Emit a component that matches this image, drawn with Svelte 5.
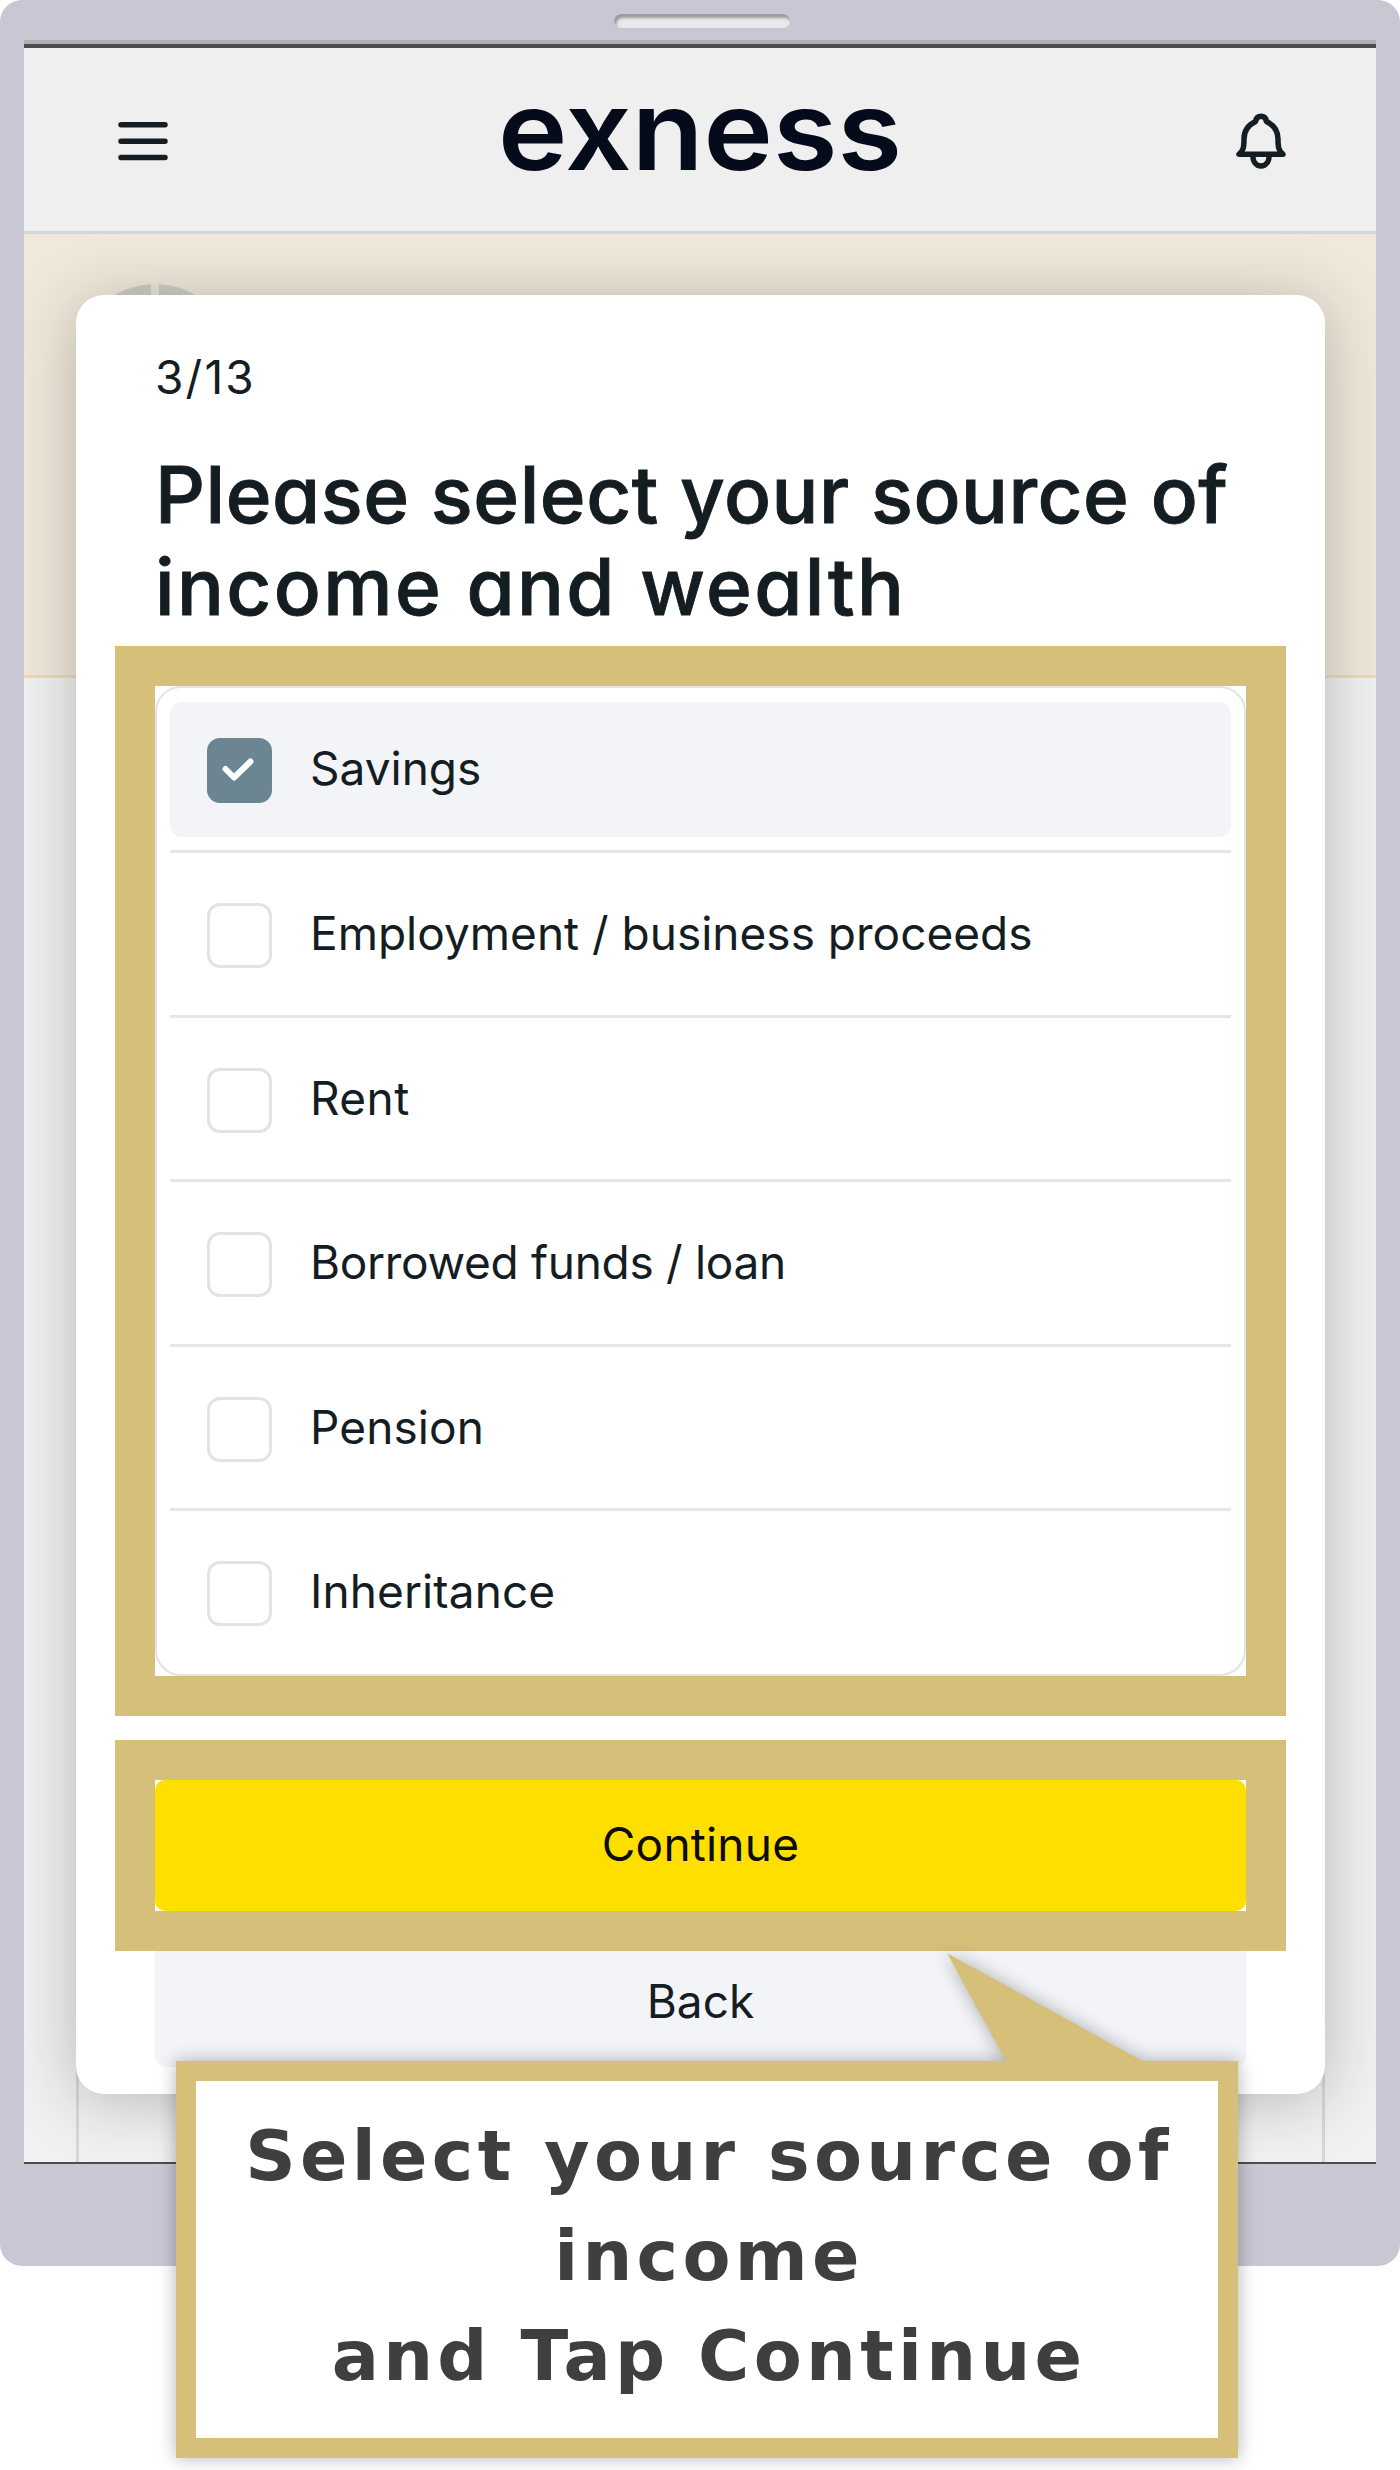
<script lang="ts">
	// Current step of the questionnaire
	let step: number = 3;
	let totalSteps: number = 13;

	// Available sources of income
	let sources: Array<{ name: string; spacing: string; checked: boolean }> = [
		{ name: 'Savings', spacing: '0', checked: true },
		{ name: 'Employment / business proceeds', spacing: '0', checked: false },
		{ name: 'Rent', spacing: '0.4px', checked: false },
		{ name: 'Borrowed funds / loan', spacing: '-0.3px', checked: false },
		{ name: 'Pension', spacing: '0.1px', checked: false },
		{ name: 'Inheritance', spacing: '0.1px', checked: false }
	];

	function toggle(index: number) {
		sources[index].checked = !sources[index].checked;
	}
</script>

<main class="guide">
	<div class="phone">
		<div class="speaker"></div>
		<div class="screen">
			<header>
				<button class="icon-button" aria-label="Menu">
					<svg width="50" height="54" viewBox="0 0 50 54">
						<path d="M3 11.800H47M3 28.200H47M3 44.500H47" />
					</svg>
				</button>
				<svg class="logo" width="404" height="183" viewBox="0 0 404 183">
					<text x="0" y="122" textLength="404" lengthAdjust="spacingAndGlyphs">exness</text>
				</svg>
				<button class="icon-button" aria-label="Notifications">
					<svg width="50" height="58" viewBox="0 0 50 58">
						<path
							d="M25 5.300C21.800 5.300 20 7 19.600 10.400C12 14 8 20 8 28C8 36 7.500 39.500 3 43.300H47C42.500 39.500 42 36 42 28C42 20 38 14 30.400 10.400C30 7 28.200 5.300 25 5.300Z"
						/>
						<path d="M16.800 44C16.800 50.500 20 55 25 55S33.200 50.500 33.200 44" />
					</svg>
				</button>
			</header>
			<div class="page">
				<div class="banner">
					<svg width="158" height="158" viewBox="0 0 158 158">
						<circle cx="79" cy="79" r="79" />
						<path d="M79 0V79" />
					</svg>
				</div>
				<div class="card">
					<p class="step">{step}/{totalSteps}</p>
					<h1>
						<span class="line">Please select your source of</span>
						<span class="line wide">income and wealth</span>
					</h1>
					<div class="highlight">
						<ul>
							{#each sources as source, i}
								<li>
									<button class="option" class:checked={source.checked} on:click={() => toggle(i)}>
										<span class="box">
											{#if source.checked}
												<svg width="65" height="65" viewBox="0 0 65 65">
													<path d="M18.500 31L27 39.500L43.500 23.500" />
												</svg>
											{/if}
										</span>
										<span class="label" style:letter-spacing={source.spacing}>{source.name}</span>
									</button>
								</li>
							{/each}
						</ul>
					</div>
					<div class="highlight submit">
						<button class="continue">Continue</button>
					</div>
					<button class="back">Back</button>
				</div>
			</div>
		</div>
	</div>

	<div class="callout">
		<svg class="tail" width="200" height="110" viewBox="0 0 200 110">
			<path d="M0 0L199 110H60Z" />
		</svg>
		<p>Select your source of income<br />and Tap Continue</p>
	</div>
</main>

<style>
	:global(body) {
		background: #fff;
	}

	.guide {
		position: relative;
		width: 1400px;
		height: 2470px;
		overflow: hidden;
		font-family: Inter, 'Liberation Sans', sans-serif;
		color: #141d22;
	}

	button {
		padding: 0;
		border: 0;
		background: none;
		font: inherit;
		color: inherit;
	}

	.phone {
		box-sizing: border-box;
		height: 2266px;
		padding: 14px 24px 0;
		border-radius: 22px;
		background: #c8c7d3;
	}

	.speaker {
		width: 176px;
		height: 14px;
		margin: 0 0 12px 590px;
		border-radius: 7px;
		background: #e9e9e9;
		box-shadow: inset 2px 4px 3px #999b9d;
	}

	.screen {
		height: 2118px;
		border-top: 4px solid #b0b0b2;
		border-bottom: 2px solid #4b4e4c;
		overflow: hidden;
		background: #f0f1f1;
	}

	header {
		box-sizing: border-box;
		display: flex;
		justify-content: space-between;
		align-items: center;
		height: 190px;
		padding: 0 90px 0 94px;
		border-top: 4px solid #4e4e51;
		border-bottom: 3px solid #d2d6d9;
		background: #efefef;
	}

	.icon-button {
		display: flex;
	}

	.icon-button svg {
		fill: none;
		stroke: #141d22;
		stroke-width: 5.500;
		stroke-linecap: round;
		stroke-linejoin: round;
	}

	.logo {
		margin-right: 5px;
	}

	.logo text {
		font-size: 111px;
		font-weight: 600;
		fill: #060b1c;
	}

	.page {
		position: relative;
		height: 1928px;
	}

	.banner {
		box-sizing: border-box;
		height: 444px;
		padding: 50px 0 0 52px;
		border-bottom: 3px solid #eddcae;
		background: #f0e9db;
	}

	.banner circle {
		fill: #cfcdc6;
	}

	.banner path {
		stroke: #ebe6da;
		stroke-width: 8;
	}

	/* dialog floating over the page */
	.card {
		position: absolute;
		top: 61px;
		left: 52px;
		box-sizing: border-box;
		width: 1249px;
		height: 1799px;
		padding: 56px 39px 0;
		border-radius: 28px;
		background: #fff;
		box-shadow: 0 6px 64px rgba(25, 28, 28, 0.27);
	}

	.page::before {
		content: '';
		position: absolute;
		left: 52px;
		bottom: 0;
		box-sizing: border-box;
		width: 1249px;
		height: 120px;
		border: solid #d6d8d8;
		border-width: 0 3px;
	}

	.step {
		margin: 0 0 46px 40px;
		font-size: 46px;
		line-height: 52px;
		letter-spacing: 2.200px;
	}

	h1 {
		margin: 0 0 0 40px;
		font-size: 78px;
		font-weight: 500;
		line-height: 91.500px;
		font-feature-settings: 'cv11';
		-webkit-text-stroke: 0.9px #141d22;
		white-space: nowrap;
	}

	.line {
		display: block;
		letter-spacing: 0.500px;
	}

	.line.wide {
		letter-spacing: 2.400px;
	}

	.highlight {
		box-sizing: border-box;
		width: 1171px;
		height: 1070px;
		margin-top: 14px;
		border: 40px solid #d5bf79;
	}

	ul {
		box-sizing: border-box;
		height: 990px;
		margin: 0;
		padding: 0.400px 13px 0;
		border: 2px solid #e3e3e3;
		border-radius: 26px;
		list-style: none;
	}

	li {
		box-sizing: border-box;
		height: 164.600px;
		padding: 14px 0 13px;
		border-bottom: 3px solid #e6e6e6;
	}

	li:last-child {
		border-bottom: 0;
	}

	.option {
		display: flex;
		align-items: center;
		gap: 38px;
		width: 100%;
		height: 135px;
		padding-left: 37px;
		border-radius: 12px;
		font-size: 46px;
		text-align: left;
	}

	.option.checked {
		background: #f3f4f7;
	}

	.box {
		box-sizing: border-box;
		width: 65px;
		height: 65px;
		margin-top: 2px;
		border: 3px solid #e3e3e3;
		border-radius: 13px;
	}

	.checked .box {
		border: 0;
		background: #6c8593;
	}

	.box path {
		fill: none;
		stroke: #fff;
		stroke-width: 6;
		stroke-linecap: round;
		stroke-linejoin: round;
	}

	.label {
		margin-top: -3px;
	}

	.highlight.submit {
		height: 211px;
		margin-top: 24px;
	}

	.continue {
		display: block;
		width: 100%;
		height: 131px;
		padding-bottom: 3px;
		border-radius: 10px;
		background: #ffdf00;
		font-size: 46px;
		letter-spacing: 0.200px;
		color: #0c0c08;
	}

	.back {
		display: block;
		width: 1091px;
		height: 116px;
		margin-left: 40px;
		padding-bottom: 17px;
		border-radius: 0 0 12px 12px;
		background: #f3f4f7;
		font-size: 46px;
	}

	/* tooltip pointing at the continue button */
	.callout {
		position: absolute;
		top: 2061px;
		left: 176px;
		box-sizing: border-box;
		width: 1062px;
		height: 397px;
		padding: 25px 0 0 4px;
		border: 20px solid #d5bf79;
		background: #fff;
		filter: drop-shadow(0 0 9px rgba(0, 0, 0, 0.3));
	}

	.tail {
		position: absolute;
		top: -128px;
		left: 751px;
		fill: #d5bf79;
	}

	.callout p {
		margin: 0;
		font-family: Verdana, 'DejaVu Sans', sans-serif;
		font-size: 70px;
		font-weight: bold;
		line-height: 100px;
		letter-spacing: 4.300px;
		text-align: center;
		color: #3e403f;
	}
</style>
